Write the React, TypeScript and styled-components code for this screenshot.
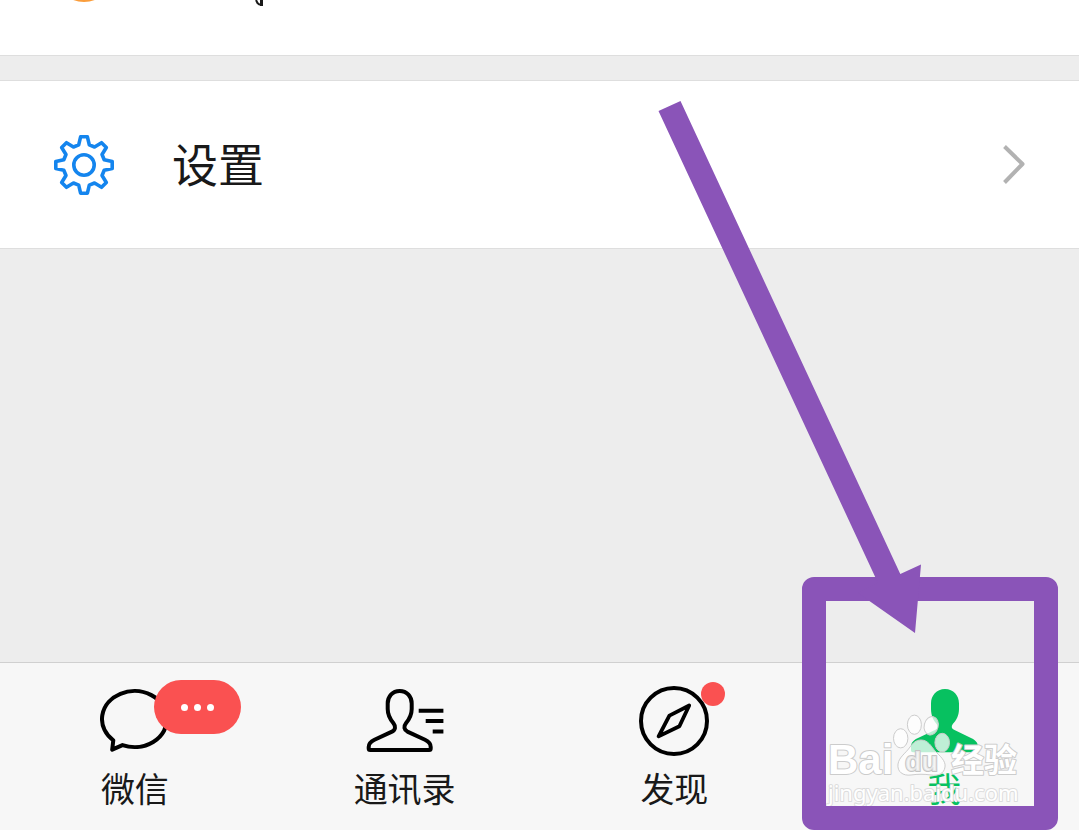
import React from "react";
import styled, { createGlobalStyle } from "styled-components";

const GlobalStyle = createGlobalStyle`
  *, *::before, *::after { box-sizing: border-box; }
  body {
    margin: 0;
    background: #ededed;
    font-family: "Noto Sans CJK SC", sans-serif;
  }
`;

const Page = styled.div`
  position: relative;
  display: flex;
  flex-direction: column;
  min-height: 100vh;
  overflow: hidden;
  background: #ededed;
`;

const List = styled.main`
  flex: 1;
  display: flex;
  flex-direction: column;
  gap: 24px;
`;

const PreviousRow = styled.div`
  display: flex;
  align-items: flex-start;
  gap: 158px;
  height: 56px;
  padding-left: 72px;
  background: #fff;
  border-bottom: 1px solid #dedede;
`;

const SettingsRow = styled.a`
  display: flex;
  align-items: center;
  gap: 58px;
  height: 169px;
  padding: 0 53px 0 54px;
  background: #fff;
  border-top: 1px solid #dedede;
  border-bottom: 1px solid #dedede;
  color: #191919;
  text-decoration: none;
`;

const RowTitle = styled.span`
  flex: 1;
  padding-bottom: 6px;
  font-size: 46px;
  line-height: 60px;
`;

const TabBar = styled.nav`
  display: grid;
  grid-template-columns: repeat(4, 1fr);
  height: 168px;
  background: #f7f7f7;
  border-top: 1px solid #d0d0d0;
`;

const Tab = styled.button<{ $active?: boolean }>`
  display: flex;
  flex-direction: column;
  align-items: center;
  gap: 10px;
  padding: 23px 0 0;
  border: 0;
  background: none;
  color: ${(p) => (p.$active ? "#07c160" : "#191919")};
  font-family: inherit;
  cursor: pointer;
`;

const TabIcon = styled.span`
  position: relative;
  display: flex;
  height: 70px;
`;

const TabLabel = styled.span`
  font-size: 34px;
  line-height: 44px;
`;

const MoreBadge = styled.span`
  position: absolute;
  top: -6px;
  left: 54px;
  display: flex;
  align-items: center;
  justify-content: center;
  gap: 6px;
  width: 87px;
  height: 54px;
  border-radius: 27px;
  background: #fa5151;
`;

const BadgeDot = styled.i`
  width: 7px;
  height: 7px;
  border-radius: 50%;
  background: #fff;
`;

const UnreadDot = styled.span`
  position: absolute;
  top: -4px;
  left: 62px;
  width: 24px;
  height: 24px;
  border-radius: 50%;
  background: #fa5151;
`;

const Annotation = styled.svg`
  position: absolute;
  right: 0;
  bottom: 0;
  pointer-events: none;
`;

const gearPoints = Array.from({ length: 8 })
  .flatMap((_, k) => {
    const a = (k * Math.PI) / 4;
    return [
      [-5.3, -20.2],
      [-3.4, -28.2],
      [3.4, -28.2],
      [5.3, -20.2],
    ].map(
      ([x, y]) =>
        `${(30 + x * Math.cos(a) - y * Math.sin(a)).toFixed(2)},${(
          30 +
          x * Math.sin(a) +
          y * Math.cos(a)
        ).toFixed(2)}`
    );
  })
  .join(" ");

const GearIcon = () => (
  <svg width="60" height="60" viewBox="0 0 60 60" fill="none" stroke="#1485ee" strokeWidth="3.6" strokeLinejoin="round" aria-hidden="true">
    <polygon points={gearPoints} />
    <circle cx="30" cy="30" r="10.2" />
  </svg>
);

const ChevronIcon = () => (
  <svg width="24" height="40" viewBox="0 0 24 40" fill="none" stroke="#b2b2b2" strokeWidth="4" strokeLinejoin="round" aria-hidden="true">
    <path d="M2.5 1.5 20.5 19 2.5 37.5" />
  </svg>
);

const ChatIcon = () => (
  <svg width="70" height="70" viewBox="0 0 70 70" fill="none" stroke="#000" strokeWidth="4" strokeLinejoin="round" aria-hidden="true">
    <path d="M13.3 54.3A32.5 28 0 1 1 22.5 59.1L12.2 63.7Z" />
  </svg>
);

const ContactsIcon = () => (
  <svg width="78" height="70" viewBox="0 0 78 70" fill="none" stroke="#000" strokeWidth="4" strokeLinejoin="round" aria-hidden="true">
    <path d="M33.7 5C26.4 5 21.7 10.5 21.7 17.5V23C21.7 29 24 33 27.3 37C30 40.5 29.5 43.8 26 45.6L8.5 53.8C4.5 55.7 2.7 57.6 2.7 61V62.5Q2.7 64 4.2 64H63.2Q64.7 64 64.7 62.5V61C64.7 57.6 63 55.7 59 53.8L41.4 45.6C38 43.8 37.4 40.5 40.1 37C43.4 33 45.7 29 45.7 23V17.5C45.7 10.5 41 5 33.7 5Z" />
    <path d="M52.7 24.8H77.4M59.7 35H77.4M66.7 45.6H77.4" />
  </svg>
);

const CompassIcon = () => (
  <svg width="70" height="70" viewBox="0 0 70 70" fill="none" stroke="#000" strokeWidth="4" strokeLinejoin="round" aria-hidden="true">
    <circle cx="35" cy="35" r="33" />
    <path strokeWidth="3.8" d="M50.2 19.5 30.4 29.6 19.6 50.4 40.4 40.2Z" />
  </svg>
);

const MeIcon = () => (
  <svg width="70" height="70" viewBox="0 0 70 70" fill="#07c160" aria-hidden="true">
    <path d="M36 3C27.5 3 22 9.5 22 17.5V23C22 29.5 24.5 34.5 27.6 38C29.5 40.3 29 42.5 26.5 43.8L8.5 52.2C4 54.3 2 57 2 61V64.5Q2 66.3 3.8 66.3H67.2Q69 66.3 69 64.5V61C69 57 67 54.3 62.5 52.2L45 43.8C42.5 42.5 42 40.3 43.8 38C47.5 34 50 29.5 50 23V17.5C50 9.5 44.5 3 36 3Z" />
  </svg>
);

const Watermark = () => (
  <g fill="#fff" fillOpacity="0.74" stroke="#cccccc" strokeWidth="1" strokeLinejoin="round">
    <ellipse cx="900.7" cy="738.3" rx="7.2" ry="9.6" />
    <ellipse cx="914.4" cy="724.7" rx="7" ry="9.6" />
    <ellipse cx="931.2" cy="725.7" rx="7" ry="9.3" transform="rotate(14 931.2 725.7)" />
    <ellipse cx="942.2" cy="742.6" rx="7.3" ry="9.3" />
    <path d="M921 740C928 740 931 746 935 751C940 756 946 761 945 767C944 774 938 776 931 775C924 774 918 774 911 775C903 776 897 772 898 764C899 757 906 753 910 747C913 743 916 740 921 740Z" />
    <g strokeWidth="2" paintOrder="stroke" fillOpacity="1">
      <text x="828" y="774" fontFamily="Liberation Sans, sans-serif" fontWeight="700" fontSize="42">Bai</text>
      <text x="951" y="772" fontFamily="Noto Sans CJK SC, sans-serif" fontWeight="700" fontSize="33">经验</text>
    </g>
    <text x="905" y="771" fontFamily="Liberation Sans, sans-serif" fontWeight="700" fontSize="27" fill="#f4f4f4" stroke="#c4c4c4" strokeWidth="2" paintOrder="stroke">du</text>
    <text x="828" y="801" fontFamily="Noto Sans, sans-serif" fontSize="22" stroke="#dcdcdc" strokeWidth="2" paintOrder="stroke" fillOpacity="1">jingyan.baidu.com</text>
  </g>
);

export default function App() {
  return (
    <>
      <GlobalStyle />
      <Page>
        <List>
          <PreviousRow>
            <svg width="24" height="3" viewBox="0 0 24 3" aria-hidden="true">
              <circle cx="12" cy="-28" r="30" fill="#fa9d3b" />
            </svg>
            <svg width="12" height="7" viewBox="0 0 12 7" fill="none" stroke="#191919" aria-hidden="true">
              <path strokeWidth="2" d="M2 0 3.5 3 6 5" />
              <path strokeWidth="3" d="M7.5 0V6" />
            </svg>
          </PreviousRow>
          <SettingsRow href="#settings">
            <GearIcon />
            <RowTitle>设置</RowTitle>
            <ChevronIcon />
          </SettingsRow>
        </List>
        <TabBar>
          <Tab type="button">
            <TabIcon>
              <ChatIcon />
              <MoreBadge>
                <BadgeDot />
                <BadgeDot />
                <BadgeDot />
              </MoreBadge>
            </TabIcon>
            <TabLabel>微信</TabLabel>
          </Tab>
          <Tab type="button">
            <TabIcon>
              <ContactsIcon />
            </TabIcon>
            <TabLabel>通讯录</TabLabel>
          </Tab>
          <Tab type="button">
            <TabIcon>
              <CompassIcon />
              <UnreadDot />
            </TabIcon>
            <TabLabel>发现</TabLabel>
          </Tab>
          <Tab type="button" $active aria-current="page">
            <TabIcon>
              <MeIcon />
            </TabIcon>
            <TabLabel>我</TabLabel>
          </Tab>
        </TabBar>
        <Annotation width="429" height="740" viewBox="650 90 429 740">
          <Watermark />
          <g fill="#8a54b8">
            <rect x="814" y="589" width="232" height="229" fill="none" stroke="#8a54b8" strokeWidth="24" strokeLinejoin="round" />
            <polygon points="658.5,111 680.5,101 900.3,574 921,564.5 915,633 858,593 878,583" />
          </g>
        </Annotation>
      </Page>
    </>
  );
}
